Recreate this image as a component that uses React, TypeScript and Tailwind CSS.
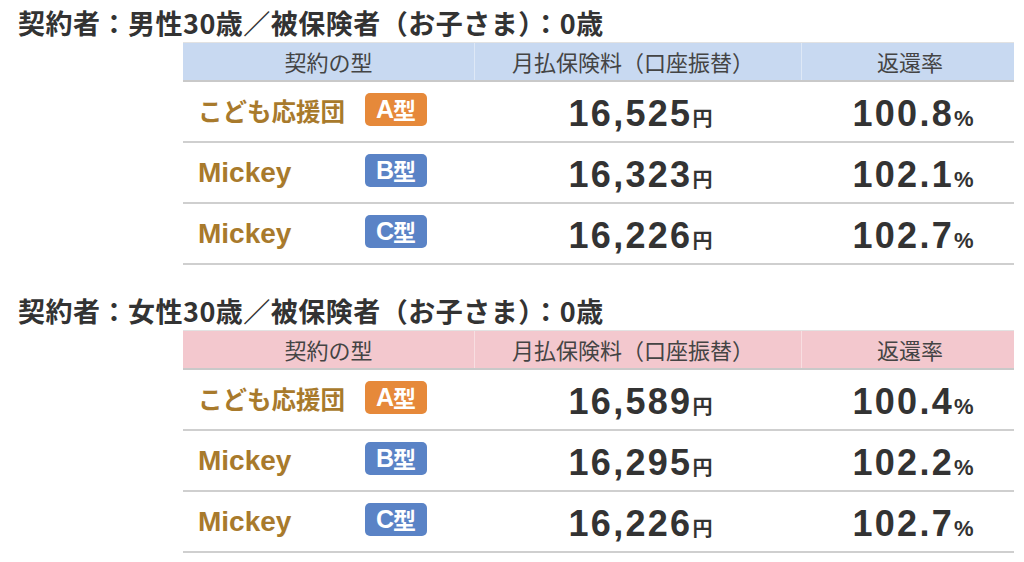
import React from "react";

type Row = { name: string; badge: "A" | "B" | "C"; price: string; rate: string };

const male: Row[] = [
  { name: "こども応援団", badge: "A", price: "16,525", rate: "100.8" },
  { name: "Mickey", badge: "B", price: "16,323", rate: "102.1" },
  { name: "Mickey", badge: "C", price: "16,226", rate: "102.7" },
];
const female: Row[] = [
  { name: "こども応援団", badge: "A", price: "16,589", rate: "100.4" },
  { name: "Mickey", badge: "B", price: "16,295", rate: "102.2" },
  { name: "Mickey", badge: "C", price: "16,226", rate: "102.7" },
];

const jp = { fontFamily: '"Noto Sans CJK JP", "Noto Sans", sans-serif' };
const num = { fontFamily: '"Liberation Sans", "Noto Sans CJK JP", sans-serif' };

function Badge({ t }: { t: "A" | "B" | "C" }) {
  const bg = t === "A" ? "bg-[#e6893a]" : "bg-[#5a83c6]";
  return (
    <div
      className={`${bg} w-[62px] h-[33px] mb-[4px] rounded-[5px] flex items-center justify-center text-white font-bold leading-none`}
    >
      <span className="text-[25px] tracking-[-1px]" style={num}>{t}</span>
      <span className="text-[23px]" style={jp}>型</span>
    </div>
  );
}

function Table({ title, rows, headerBg }: { title: string; rows: Row[]; headerBg: string }) {
  return (
    <div className="flex flex-col">
      <div className="pl-[18px] h-[28px] text-[27px] leading-[28px] font-bold tracking-[0.5px] text-[#333] whitespace-nowrap" style={jp}>
        {title}
      </div>
      <div className="ml-[183px] w-[831px] mt-[5px]">
        <div className={`${headerBg} h-[40px] border-t border-[#e2e2e2] border-b-2 border-b-[#c9c9c9] flex text-[22px] text-[#444]`} style={jp}>
          <div className="w-[292px] flex items-center justify-center border-r border-white/40">契約の型</div>
          <div className="w-[327px] flex items-center justify-center pr-[10px] border-r border-white/40">月払保険料（口座振替）</div>
          <div className="w-[212px] flex items-center justify-center pl-[4px]">返還率</div>
        </div>
        {rows.map((r, i) => (
          <div key={i} className="h-[61px] border-b-2 border-[#cfcfcf] flex items-center">
            <div className="w-[292px] flex items-center pl-[15px]">
              {r.name === "Mickey" ? (
                <div className="w-[167px] text-[28px] font-bold text-[#a87a2c] whitespace-nowrap" style={num}>
                  {r.name}
                </div>
              ) : (
                <div className="w-[167px] text-[24.5px] font-bold text-[#a87a2c] whitespace-nowrap" style={jp}>
                  {r.name}
                </div>
              )}
              <Badge t={r.badge} />
            </div>
            <div className="w-[327px] mt-[4px] flex items-baseline justify-center pl-[4px] text-[#333] font-bold" style={num}>
              <span className="text-[36px] leading-none tracking-[2.3px]">{r.price}</span>
              <span className="text-[20px] leading-none" style={jp}>円</span>
            </div>
            <div className="w-[212px] mt-[4px] flex items-baseline justify-center pl-[10px] text-[#333] font-bold" style={num}>
              <span className="text-[36px] leading-none tracking-[2.3px]">{r.rate}</span>
              <span className="text-[22px] leading-none">%</span>
            </div>
          </div>
        ))}
      </div>
    </div>
  );
}

export default function App() {
  return (
    <div className="w-[1024px] h-[562px] bg-white overflow-hidden pt-[9px]">
      <Table title="契約者：男性30歳／被保険者（お子さま）：0歳" rows={male} headerBg="bg-[#c8d9f1]" />
      <div className="h-[32px]" />
      <Table title="契約者：女性30歳／被保険者（お子さま）：0歳" rows={female} headerBg="bg-[#f3c8ce]" />
    </div>
  );
}
